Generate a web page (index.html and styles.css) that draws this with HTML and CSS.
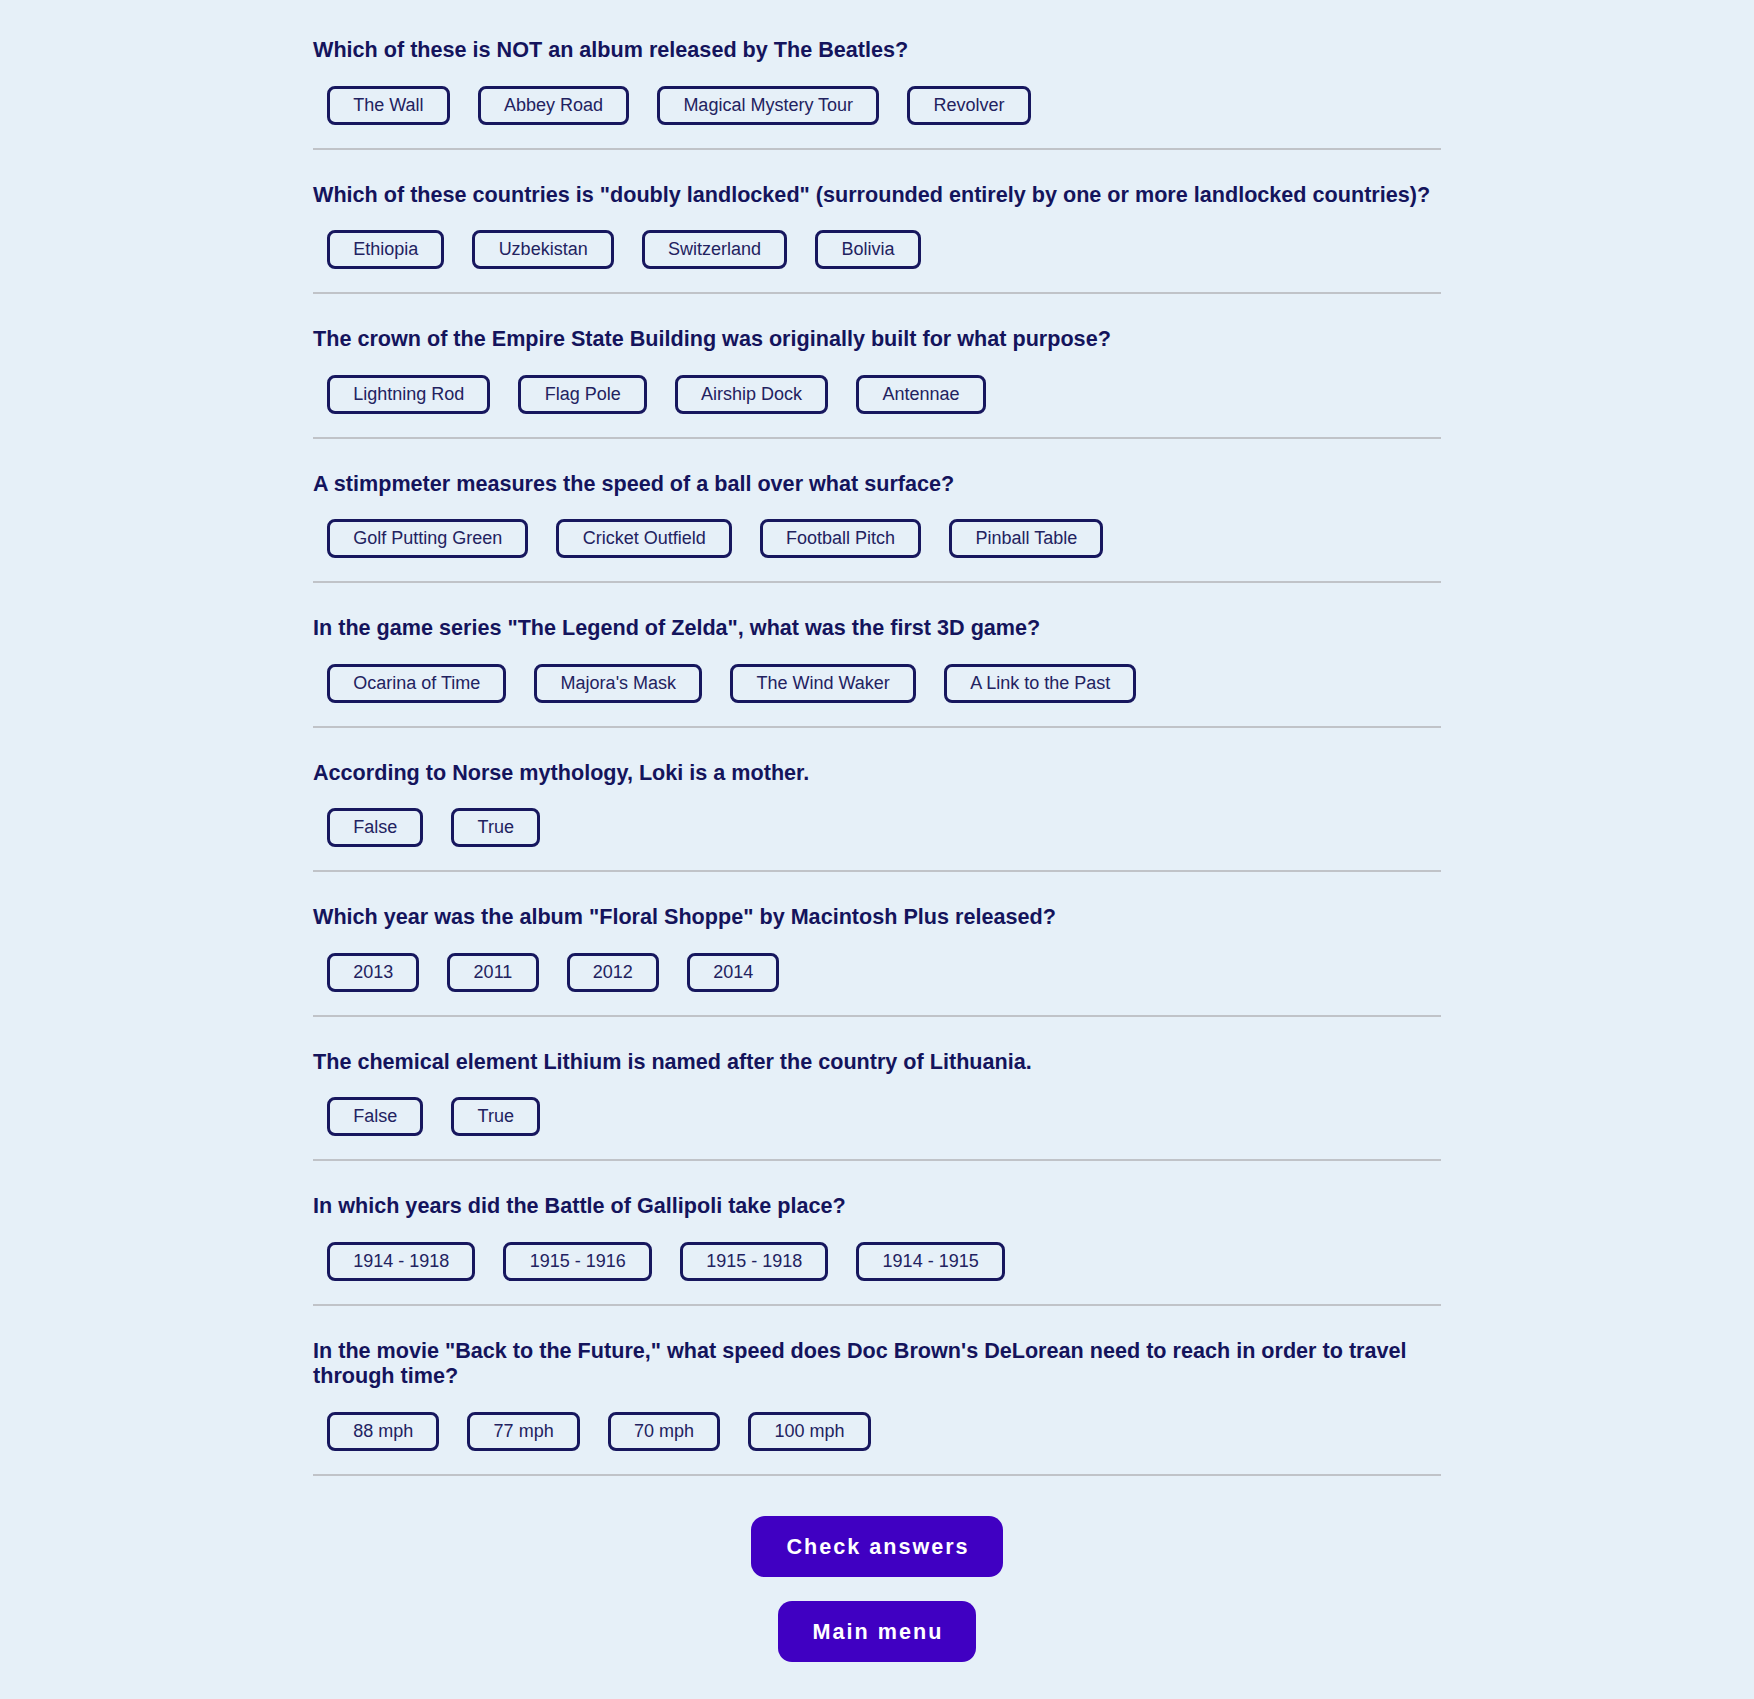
FILE: index.html
```html
<!DOCTYPE html>
<html lang="en">
<head>
<meta charset="utf-8">
<title>Quiz</title>
<link rel="stylesheet" href="styles.css">
</head>
<body>
<main class="quiz">
  <section class="item">
    <h2 class="question">Which of these is NOT an album released by The Beatles?</h2>
    <div class="answers">
      <button class="answer">The Wall</button>
      <button class="answer">Abbey Road</button>
      <button class="answer">Magical Mystery Tour</button>
      <button class="answer">Revolver</button>
    </div>
  </section>
  <section class="item">
    <h2 class="question">Which of these countries is "doubly landlocked" (surrounded entirely by one or more landlocked countries)?</h2>
    <div class="answers">
      <button class="answer">Ethiopia</button>
      <button class="answer">Uzbekistan</button>
      <button class="answer">Switzerland</button>
      <button class="answer">Bolivia</button>
    </div>
  </section>
  <section class="item">
    <h2 class="question">The crown of the Empire State Building was originally built for what purpose?</h2>
    <div class="answers">
      <button class="answer">Lightning Rod</button>
      <button class="answer">Flag Pole</button>
      <button class="answer">Airship Dock</button>
      <button class="answer">Antennae</button>
    </div>
  </section>
  <section class="item">
    <h2 class="question">A stimpmeter measures the speed of a ball over what surface?</h2>
    <div class="answers">
      <button class="answer">Golf Putting Green</button>
      <button class="answer">Cricket Outfield</button>
      <button class="answer">Football Pitch</button>
      <button class="answer">Pinball Table</button>
    </div>
  </section>
  <section class="item">
    <h2 class="question">In the game series "The Legend of Zelda", what was the first 3D game?</h2>
    <div class="answers">
      <button class="answer">Ocarina of Time</button>
      <button class="answer">Majora's Mask</button>
      <button class="answer">The Wind Waker</button>
      <button class="answer">A Link to the Past</button>
    </div>
  </section>
  <section class="item">
    <h2 class="question">According to Norse mythology, Loki is a mother.</h2>
    <div class="answers">
      <button class="answer">False</button>
      <button class="answer">True</button>
    </div>
  </section>
  <section class="item">
    <h2 class="question">Which year was the album "Floral Shoppe" by Macintosh Plus released?</h2>
    <div class="answers">
      <button class="answer">2013</button>
      <button class="answer">2011</button>
      <button class="answer">2012</button>
      <button class="answer">2014</button>
    </div>
  </section>
  <section class="item">
    <h2 class="question">The chemical element Lithium is named after the country of Lithuania.</h2>
    <div class="answers">
      <button class="answer">False</button>
      <button class="answer">True</button>
    </div>
  </section>
  <section class="item">
    <h2 class="question">In which years did the Battle of Gallipoli take place?</h2>
    <div class="answers">
      <button class="answer">1914 - 1918</button>
      <button class="answer">1915 - 1916</button>
      <button class="answer">1915 - 1918</button>
      <button class="answer">1914 - 1915</button>
    </div>
  </section>
  <section class="item">
    <h2 class="question">In the movie "Back to the Future," what speed does Doc Brown's DeLorean need to reach in order to travel through time?</h2>
    <div class="answers">
      <button class="answer">88 mph</button>
      <button class="answer">77 mph</button>
      <button class="answer">70 mph</button>
      <button class="answer">100 mph</button>
    </div>
  </section>
  <div class="actions">
    <button class="primary">Check answers</button>
    <button class="primary">Main menu</button>
  </div>
</main>
</body>
</html>
```
FILE: styles.css
```css
html, body {
  margin: 0;
  padding: 0;
  background: #e6f0f8;
}

body {
  font-family: "Liberation Sans", Arial, sans-serif;
  color: #14145c;
}

.quiz {
  width: 1128px;
  margin: 0 auto;
  padding: 5px 0 37px;
}

.item {
  padding: 32px 0 22.6px;
  border-bottom: 2px solid #c0c3c8;
}

.question {
  margin: 0 0 23px;
  font-size: 21.6px;
  line-height: 1.2;
  font-weight: 700;
  color: #14145c;
}

.answers {
  display: flex;
  gap: 28px;
  padding-left: 14px;
}

.answer {
  font-family: "Liberation Sans", Arial, sans-serif;
  font-size: 18px;
  line-height: 21px;
  padding: 6px 23.2px;
  border: 3px solid #17175e;
  border-radius: 8px;
  background: transparent;
  color: #222260;
  cursor: pointer;
}

.actions {
  display: flex;
  flex-direction: column;
  align-items: center;
  gap: 24px;
  margin-top: 40px;
}

.primary {
  font-family: "Liberation Sans", Arial, sans-serif;
  font-size: 21.6px;
  font-weight: 700;
  letter-spacing: 2px;
  line-height: 25px;
  padding: 18px 33px 18px 35px;
  border: none;
  border-radius: 14px;
  background: #4000c2;
  color: #ffffff;
  cursor: pointer;
}
```
